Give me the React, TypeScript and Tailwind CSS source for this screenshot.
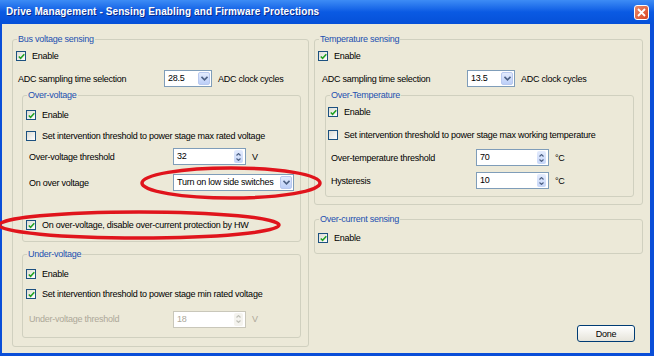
import type { ReactNode } from 'react'

function Check({ checked = false }: { checked?: boolean }) {
  return (
    <span className="flex h-[10px] w-[10px] shrink-0 items-center justify-center border border-[#1c5180] bg-linear-to-br from-[#dcdcd4] to-white">
      {checked && (
        <svg width="7" height="7" viewBox="0 0 7 7">
          <path d="M0.8 3.4 L2.6 5.3 L6.3 1.2" stroke="#21a121" strokeWidth="1.5" fill="none" />
        </svg>
      )}
    </span>
  )
}

function CheckRow({ label, checked, className = '' }: { label: string; checked?: boolean; className?: string }) {
  return (
    <div className={`flex items-center gap-[6px] ${className}`}>
      <Check checked={checked} />
      <span>{label}</span>
    </div>
  )
}

function Group({ title, className = '', children }: { title: string; className?: string; children: ReactNode }) {
  return (
    <fieldset className={`rounded-[3px] border border-[#d0d0bf] ${className}`}>
      <legend className="ml-[4px] px-[1px] leading-[12px] text-[#2350b0]">{title}</legend>
      {children}
    </fieldset>
  )
}

function Chevron() {
  return (
    <svg width="7" height="5" viewBox="0 0 7 5">
      <path d="M0.5 0.8 L3.5 3.8 L6.5 0.8" stroke="#4d6185" strokeWidth="1.6" fill="none" />
    </svg>
  )
}

function Combo({ value, className = '' }: { value: string; className?: string }) {
  return (
    <div className={`flex h-[17px] items-center border border-[#7f9db9] bg-white ${className}`}>
      <span className="flex-1 whitespace-nowrap pl-[3px] leading-none">{value}</span>
      <span className="mr-px flex h-[13px] w-[12px] shrink-0 items-center justify-center rounded-[2px] border border-[#b9c9ef] bg-linear-to-b from-[#e3ebfd] to-[#bccff8]">
        <Chevron />
      </span>
    </div>
  )
}

function Spin({ value, disabled = false, className = '' }: { value: string; disabled?: boolean; className?: string }) {
  const arrow = disabled ? '#c0c0b8' : '#4d6185'
  return (
    <div
      className={`flex h-[17px] items-center border bg-white ${
        disabled ? 'border-[#c9c7ba] text-[#aca899]' : 'border-[#7f9db9]'
      } ${className}`}
    >
      <span className="flex-1 pl-[3px] leading-none">{value}</span>
      <span
        className={`mr-[2px] flex h-[13px] w-[9px] flex-col items-center justify-center gap-[2px] rounded-[2px] ${
          disabled ? 'bg-[#f4f3ee]' : 'bg-linear-to-b from-[#e3ebfd] to-[#c6d6f8]'
        }`}
      >
        <svg width="5" height="3" viewBox="0 0 5 3">
          <path d="M0.5 2.5 L2.5 0.6 L4.5 2.5" stroke={arrow} strokeWidth="1.2" fill="none" />
        </svg>
        <svg width="5" height="3" viewBox="0 0 5 3">
          <path d="M0.5 0.5 L2.5 2.4 L4.5 0.5" stroke={arrow} strokeWidth="1.2" fill="none" />
        </svg>
      </span>
    </div>
  )
}

export default function App() {
  return (
    <div
      className="relative flex h-[356px] w-[654px] flex-col overflow-hidden bg-[#0a4ed8] text-[9px] leading-[12px] text-black"
      style={{ fontFamily: '"Liberation Sans", Arial, sans-serif' }}
    >
      {/* Title bar */}
      <div className="flex h-[24px] shrink-0 items-center justify-between bg-linear-to-b from-[#3d8cf5] via-[#0a5ae3] to-[#0650d8] pl-[6px] pr-[5px]">
        <span className="text-[10px] font-bold tracking-[0.1px] text-white [text-shadow:1px_1px_0_#0a2a8a]">
          Drive Management - Sensing Enabling and Firmware Protections
        </span>
        <span className="flex h-[15px] w-[15px] items-center justify-center rounded-[3px] border border-white bg-linear-to-br from-[#e88a6a] to-[#d9411c]">
          <svg width="9" height="9" viewBox="0 0 9 9">
            <path d="M1 1 L8 8 M8 1 L1 8" stroke="white" strokeWidth="1.8" />
          </svg>
        </span>
      </div>

      {/* Body */}
      <div className="ml-[2px] mr-[4px] mb-[3px] flex flex-1 gap-[5px] bg-[#ece9d8] pl-[10px] pt-[9px] tracking-[-0.25px]">
        {/* Left column */}
        <div className="w-[297px]">
          <Group title="Bus voltage sensing" className="h-[314px]">
            <div className="pl-[3px]">
              <CheckRow label="Enable" checked className="h-[22px]" />
              <div className="mt-[3px] flex h-[17px] items-center">
                <span className="w-[148px] pl-[2px]">ADC sampling time selection</span>
                <Combo value="28.5" className="w-[48px]" />
                <span className="ml-[6px]">ADC clock cycles</span>
              </div>

              <Group title="Over-voltage" className="ml-[6px] mt-[2px] w-[279px]">
                <div className="pl-[3px] pb-[10px]">
                  <CheckRow label="Enable" checked className="h-[28px]" />
                  <CheckRow label="Set intervention threshold to power stage max rated voltage" className="h-[14px]" />
                  <div className="mt-[5px] flex h-[17px] items-center">
                    <span className="w-[147px] pl-[3px]">Over-voltage threshold</span>
                    <Spin value="32" className="w-[73px]" />
                    <span className="ml-[6px]">V</span>
                  </div>
                  <div className="mt-[9px] flex h-[17px] items-center">
                    <span className="w-[147px] pl-[3px]">On over voltage</span>
                    <Combo value="Turn on low side switches" className="w-[121px]" />
                  </div>
                  <CheckRow label="On over-voltage, disable over-current protection by HW" checked className="mt-[28px] h-[12px]" />
                </div>
              </Group>

              <Group title="Under-voltage" className="ml-[6px] mt-[6px] w-[279px]">
                <div className="pl-[3px] pb-[10px]">
                  <CheckRow label="Enable" checked className="h-[28px]" />
                  <CheckRow label="Set intervention threshold to power stage min rated voltage" checked className="h-[12px]" />
                  <div className="mt-[11px] flex h-[16px] items-center text-[#aca899]">
                    <span className="w-[147px] pl-[3px]">Under-voltage threshold</span>
                    <Spin value="18" disabled className="w-[73px]" />
                    <span className="ml-[6px]">V</span>
                  </div>
                </div>
              </Group>
            </div>
          </Group>
        </div>

        {/* Right column */}
        <div className="flex h-[314px] w-[329px] flex-col">
          <Group title="Temperature sensing">
            <div className="pl-[3px] pb-[7px]">
              <CheckRow label="Enable" checked className="h-[22px]" />
              <div className="mt-[3px] flex h-[17px] items-center">
                <span className="w-[149px] pl-[4px]">ADC sampling time selection</span>
                <Combo value="13.5" className="w-[48px]" />
                <span className="ml-[6px]">ADC clock cycles</span>
              </div>

              <Group title="Over-Temperature" className="ml-[7px] mt-[2px] w-[309px]">
                <div className="pl-[2px] pb-[7px]">
                  <CheckRow label="Enable" checked className="h-[22px]" />
                  <CheckRow label="Set intervention threshold to power stage max working temperature" className="h-[24px]" />
                  <div className="mt-[2px] flex h-[17px] items-center">
                    <span className="w-[148px] pl-[3px]">Over-temperature threshold</span>
                    <Spin value="70" className="w-[73px]" />
                    <span className="ml-[6px]">°C</span>
                  </div>
                  <div className="mt-[6px] flex h-[17px] items-center">
                    <span className="w-[148px] pl-[3px]">Hysteresis</span>
                    <Spin value="10" className="w-[73px]" />
                    <span className="ml-[6px]">°C</span>
                  </div>
                </div>
              </Group>
            </div>
          </Group>

          <Group title="Over-current sensing" className="mt-[8px]">
            <div className="pl-[3px] pb-[2px]">
              <CheckRow label="Enable" checked className="h-[26px]" />
            </div>
          </Group>

          <div className="mt-auto mb-[5px] mr-[8px] flex justify-end">
            <button className="flex h-[17px] w-[58px] items-center justify-center rounded-[3px] border border-[#003c74] bg-linear-to-b from-white to-[#e6e4da] text-[9px] text-black">
              Done
            </button>
          </div>
        </div>
      </div>

      {/* Red annotation ellipses */}
      <svg className="pointer-events-none absolute left-0 top-0" width="654" height="356">
        <ellipse cx="231" cy="183" rx="89" ry="15" fill="none" stroke="#e0141c" strokeWidth="3.5" />
        <ellipse cx="139" cy="225" rx="140" ry="13" fill="none" stroke="#e0141c" strokeWidth="3.5" />
      </svg>
    </div>
  )
}
